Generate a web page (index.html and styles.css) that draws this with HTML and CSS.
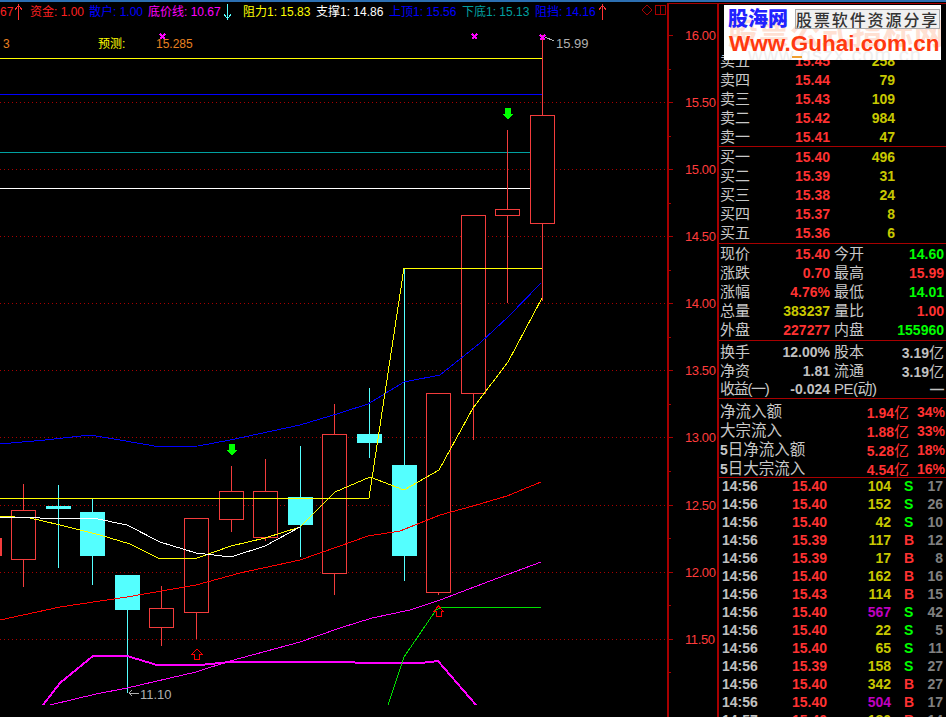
FILE: index.html
```html
<!DOCTYPE html>
<html lang="zh">
<head>
<meta charset="utf-8">
<title>K线</title>
<link rel="stylesheet" href="styles.css">
</head>
<body>
<div class="topbar"></div>
<div class="main">
  <div class="chart">
    <svg class="canvas" width="717" height="715" viewBox="0 2 717 715" xmlns="http://www.w3.org/2000/svg">
      <g class="dots">
        <path d="M0 102.5H667M0 169.5H667M0 236.5H667M0 303.5H667M0 370.5H667M0 437.5H667M0 505.5H667M0 572.5H667M0 639.5H667"/>
      </g>
      <g class="lvl">
        <path class="y" d="M0 58.5H542"/>
        <path class="b" d="M0 94.5H542"/>
        <path class="t" d="M0 152.5H542"/>
        <path class="w" d="M0 188.5H542"/>
      </g>
      <g class="wick-r">
        <path d="M23.5 484V510M23.5 559V587M161.5 586V608M161.5 627V646M196.5 612V639M231.5 466V491M231.5 519V532M265.5 459V491M265.5 537V541M334.5 404V434M334.5 573V595M438.5 592V595M473.5 393V440M507.5 130V209M507.5 215V303M542.5 35V115M542.5 223V301"/>
      </g>
      <g class="wick-c">
        <path d="M58.5 485V568M92.5 499V512M92.5 556V585M127.5 610V693M300.5 446V497M300.5 525V557M369.5 388V434M369.5 443V458M404.5 268V465M404.5 556V581"/>
      </g>
      <g class="box">
        <rect x="11.5" y="510.5" width="24" height="49"/>
        <rect x="149.5" y="608.5" width="24" height="19"/>
        <rect x="184.5" y="518.5" width="24" height="94"/>
        <rect x="219.5" y="491.5" width="24" height="28"/>
        <rect x="253.5" y="491.5" width="24" height="46"/>
        <rect x="322.5" y="434.5" width="24" height="139"/>
        <rect x="426.5" y="393.5" width="24" height="199"/>
        <rect x="461.5" y="215.5" width="24" height="178"/>
        <rect x="495.5" y="209.5" width="24" height="6"/>
        <rect x="530.5" y="115.5" width="24" height="108"/>
      </g>
      <g class="solid">
        <rect x="46" y="506" width="25" height="3"/>
        <rect x="80" y="512" width="25" height="44"/>
        <rect x="115" y="575" width="25" height="35"/>
        <rect x="288" y="497" width="25" height="28"/>
        <rect x="357" y="434" width="25" height="9"/>
        <rect x="392" y="465" width="25" height="91"/>
      </g>
      <rect class="stub" x="0" y="538" width="2" height="18"/>
      <g class="ma">
        <polyline class="mb" points="0,444 45,440 90,435 120,440 160,447 198,446 230,440 300,425 340,413 368,404 404,382 440,375 480,343 508,317 541,283"/>
        <polyline class="my" points="0,516 30,518 60,525 100,535 130,544 160,559 197,558 231,546 265,538 300,527 335,492 370,477 404,490 439,470 473,408 508,362 542,298"/>
        <polyline class="my" points="0,498 369,498 404,268 542,268"/>
        <polyline class="mw" points="0,517 40,518 93,518 127,525 160,542 196,553 231,557 265,546 300,527"/>
        <polyline class="mr" points="0,620 60,607 127,597 196,585 240,573 300,560 340,546 368,536 400,531 440,515 473,506 507,496 541,482"/>
        <polyline class="mm" points="50,705 96,694 127,688 196,672 230,661 300,642 340,628 372,618 410,610 440,600 490,581 541,562"/>
        <polyline class="mmt" points="43,705 60,683 93,656 127,656 157,665 200,665 230,662 340,662 370,663 421,663 438,661 476,705"/>
        <polyline class="mg" points="388,705 404,657 436,610 442,607 541,607"/>
      </g>
      <g class="sig-g">
        <path d="M229 444H235V450H237.500L232 455.500 226.500 450H229Z"/>
        <path d="M505 108H511V114H513.500L508 119.500 502.500 114H505Z"/>
      </g>
      <g class="sig-r">
        <path d="M197 649L202 654H199.500V659H194.500V654H192Z"/>
        <path d="M438.500 606L443 611H441V616H436V611H434Z"/>
      </g>
      <g class="xm">
        <path d="M160 34L165 39M165 34L160 39"/>
        <path d="M472 34L477 39M477 34L472 39"/>
        <path d="M540 35L545 40M545 35L540 40"/>
      </g>
      <g class="note">
        <path d="M129 693H139M129 693L132 690M129 693L132 696"/>
        <path d="M545 37L554 41"/>
      </g>
      <text class="notetext" x="140" y="699">11.10</text>
      <text class="notetext" x="556" y="48">15.99</text>
      <g class="axis">
        <path class="ax" d="M667 3.500H717M667.500 3V717M668.500 3V717"/>
        <path class="ax" d="M669 35.500H673M669 69.500H671M669 102.500H673M669 136.500H671M669 169.500H673M669 203.500H671M669 236.500H673M669 270.500H671M669 303.500H673M669 337.500H671M669 370.500H673M669 404.500H671M669 437.500H673M669 471.500H671M669 505.500H673M669 538.500H671M669 572.500H673M669 605.500H671M669 639.500H673M669 672.500H671"/>
        <path class="ax" d="M647 5L652 10 647 15 642 10ZM655.500 5.500H665.500V14.500H655.500ZM660.500 5V15"/>
      </g>
      <g class="labels">
        <text x="685" y="40">16.00</text>
        <text x="685" y="107">15.50</text>
        <text x="685" y="174">15.00</text>
        <text x="685" y="241">14.50</text>
        <text x="685" y="308">14.00</text>
        <text x="685" y="375">13.50</text>
        <text x="685" y="442">13.00</text>
        <text x="685" y="510">12.50</text>
        <text x="685" y="577">12.00</text>
        <text x="685" y="644">11.50</text>
      </g>
    </svg>
    <div class="legend">
      <div class="legend-row">
        <span class="li w14 red">67</span>
        <span class="li w16"><svg class="arr" width="9" height="16" viewBox="0 0 9 16"><path class="arr-r" d="M4.500 16V1M1 6L4.500 1 8 6"/></svg></span>
        <span class="li w59 red">资金: 1.00</span>
        <span class="li w59 blue">散户: 1.00</span>
        <span class="li w75 mag">底价线: 10.67</span>
        <span class="li w20"><svg class="arr" width="9" height="16" viewBox="0 0 9 16"><path class="arr-c" d="M4.500 0V15M1 10L4.500 15 8 10"/></svg></span>
        <span class="li w73 yel">阻力1: 15.83</span>
        <span class="li w73 wht">支撑1: 14.86</span>
        <span class="li w73 blue">上顶1: 15.56</span>
        <span class="li w73 teal">下底1: 15.13</span>
        <span class="li w63 blue">阻挡: 14.16</span>
        <span class="li w16"><svg class="arr" width="9" height="16" viewBox="0 0 9 16"><path class="arr-r" d="M4.500 16V1M1 6L4.500 1 8 6"/></svg></span>
      </div>
      <div class="legend-row second">
        <span class="li w98 org pad3">3</span>
        <span class="li w58 yel">预测:</span>
        <span class="li w73 org">15.285</span>
      </div>
    </div>
  </div>
  <aside class="side">
    <div class="logo">
      <div class="wm wm1">股票公式指标网</div>
      <div class="wm wm2">www.gszx.com.cn</div>
      <div class="logo-top">
        <span class="logo-cn">股海网</span>
        <span class="logo-sub">股票软件资源分享</span>
      </div>
      <div class="logo-url">Www.Guhai.com.cn</div>
      <div class="logo-mark"></div>
    </div>
    <section class="sec sell">
      <div class="row book"><span class="lb">卖五</span><span class="pr">15.45</span><span class="vo">258</span></div>
      <div class="row book"><span class="lb">卖四</span><span class="pr">15.44</span><span class="vo">79</span></div>
      <div class="row book"><span class="lb">卖三</span><span class="pr">15.43</span><span class="vo">109</span></div>
      <div class="row book"><span class="lb">卖二</span><span class="pr">15.42</span><span class="vo">984</span></div>
      <div class="row book"><span class="lb">卖一</span><span class="pr">15.41</span><span class="vo">47</span></div>
    </section>
    <section class="sec pb1">
      <div class="row book"><span class="lb">买一</span><span class="pr">15.40</span><span class="vo">496</span></div>
      <div class="row book"><span class="lb">买二</span><span class="pr">15.39</span><span class="vo">31</span></div>
      <div class="row book"><span class="lb">买三</span><span class="pr">15.38</span><span class="vo">24</span></div>
      <div class="row book"><span class="lb">买四</span><span class="pr">15.37</span><span class="vo">8</span></div>
      <div class="row book"><span class="lb">买五</span><span class="pr">15.36</span><span class="vo">6</span></div>
    </section>
    <section class="sec pb1">
      <div class="row quote"><span class="lb">现价</span><span class="pr">15.40</span><span class="lb">今开</span><span class="val grn">14.60</span></div>
      <div class="row quote"><span class="lb">涨跌</span><span class="pr">0.70</span><span class="lb">最高</span><span class="val rd">15.99</span></div>
      <div class="row quote"><span class="lb">涨幅</span><span class="pr">4.76%</span><span class="lb">最低</span><span class="val grn">14.01</span></div>
      <div class="row quote"><span class="lb">总量</span><span class="pr olive">383237</span><span class="lb">量比</span><span class="val rd">1.00</span></div>
      <div class="row quote"><span class="lb">外盘</span><span class="pr">227277</span><span class="lb">内盘</span><span class="val grn">155960</span></div>
    </section>
    <section class="sec">
      <div class="row quote"><span class="lb">换手</span><span class="pr gry">12.00%</span><span class="lb">股本</span><span class="val gry">3.19<i class="yi">亿</i></span></div>
      <div class="row quote"><span class="lb">净资</span><span class="pr gry">1.81</span><span class="lb">流通</span><span class="val gry">3.19<i class="yi">亿</i></span></div>
      <div class="row quote"><span class="lb tight">收益(一)</span><span class="pr gry">-0.024</span><span class="lb tight pe">PE(动)</span><span class="val gry">—</span></div>
    </section>
    <section class="sec flow">
      <div class="row flowrow"><span class="lb">净流入额</span><span class="pr">1.94<i class="yi">亿</i></span><span class="pr">34%</span></div>
      <div class="row flowrow"><span class="lb">大宗流入</span><span class="pr">1.88<i class="yi">亿</i></span><span class="pr">33%</span></div>
      <div class="row flowrow"><span class="lb"><b class="num">5</b>日净流入额</span><span class="pr">5.28<i class="yi">亿</i></span><span class="pr">18%</span></div>
      <div class="row flowrow"><span class="lb"><b class="num">5</b>日大宗流入</span><span class="pr">4.54<i class="yi">亿</i></span><span class="pr">16%</span></div>
    </section>
    <section class="ticks">
      <div class="row tick"><span>14:56</span><span class="pr">15.40</span><span class="vo">104</span><span class="grn">S</span><span class="ct">17</span></div>
      <div class="row tick"><span>14:56</span><span class="pr">15.40</span><span class="vo">152</span><span class="grn">S</span><span class="ct">26</span></div>
      <div class="row tick"><span>14:56</span><span class="pr">15.40</span><span class="vo">42</span><span class="grn">S</span><span class="ct">10</span></div>
      <div class="row tick"><span>14:56</span><span class="pr">15.39</span><span class="vo">117</span><span class="rd">B</span><span class="ct">12</span></div>
      <div class="row tick"><span>14:56</span><span class="pr">15.39</span><span class="vo">17</span><span class="rd">B</span><span class="ct">8</span></div>
      <div class="row tick"><span>14:56</span><span class="pr">15.40</span><span class="vo">162</span><span class="rd">B</span><span class="ct">16</span></div>
      <div class="row tick"><span>14:56</span><span class="pr">15.43</span><span class="vo">114</span><span class="rd">B</span><span class="ct">15</span></div>
      <div class="row tick"><span>14:56</span><span class="pr">15.40</span><span class="vo pur">567</span><span class="grn">S</span><span class="ct">42</span></div>
      <div class="row tick"><span>14:56</span><span class="pr">15.40</span><span class="vo">22</span><span class="grn">S</span><span class="ct">5</span></div>
      <div class="row tick"><span>14:56</span><span class="pr">15.40</span><span class="vo">65</span><span class="grn">S</span><span class="ct">11</span></div>
      <div class="row tick"><span>14:56</span><span class="pr">15.39</span><span class="vo">158</span><span class="grn">S</span><span class="ct">27</span></div>
      <div class="row tick"><span>14:56</span><span class="pr">15.40</span><span class="vo">342</span><span class="rd">B</span><span class="ct">27</span></div>
      <div class="row tick"><span>14:56</span><span class="pr">15.40</span><span class="vo pur">504</span><span class="rd">B</span><span class="ct">17</span></div>
      <div class="row tick"><span>14:57</span><span class="pr">15.40</span><span class="vo">180</span><span class="rd">B</span><span class="ct">14</span></div>
    </section>
  </aside>
</div>
</body>
</html>
```
FILE: styles.css
```css
* { box-sizing: border-box; }
html, body { margin: 0; padding: 0; height: 717px; overflow: hidden; background: #000; }
body { font-family: "Liberation Sans", "Noto Sans CJK SC", sans-serif; color: #c0c0c0; }
i { font-style: normal; }

.topbar { height: 2px; background: #2c6fb2; }
.main { display: flex; height: 715px; }
.chart { position: relative; width: 717px; flex: none; }
.canvas { display: block; }

.dots path { fill: none; stroke: #a80000; stroke-dasharray: 1 3; }
.lvl path { fill: none; shape-rendering: crispEdges; }
.lvl .y { stroke: #ffff00; } .lvl .b { stroke: #0000ff; } .lvl .t { stroke: #00a0a0; } .lvl .w { stroke: #fff; }
.wick-r path { fill: none; stroke: #f33c3c; shape-rendering: crispEdges; }
.wick-c path { fill: none; stroke: #54ffff; shape-rendering: crispEdges; }
.box rect { fill: #000; stroke: #f33c3c; shape-rendering: crispEdges; }
.solid rect { fill: #54ffff; }
.stub { fill: #f33c3c; }
.ma polyline { fill: none; stroke-width: 1; shape-rendering: crispEdges; }
.ma .mb { stroke: #0000ff; } .ma .my { stroke: #ffff00; } .ma .mw { stroke: #fff; }
.ma .mr { stroke: #ff0000; } .ma .mm { stroke: #ff00ff; } .ma .mg { stroke: #00e000; }
.ma .mmt { stroke: #ff00ff; stroke-width: 2; }
.sig-g path { fill: #00ff00; shape-rendering: crispEdges; }
.sig-r path { fill: none; stroke: #ff0000; shape-rendering: crispEdges; }
.xm path { fill: none; stroke: #ff00ff; stroke-width: 1.5; shape-rendering: crispEdges; }
.note path { fill: none; stroke: #b0b0b0; shape-rendering: crispEdges; }
.notetext { fill: #b0b0b0; font-size: 13px; }
.ax { fill: none; stroke: #a80000; shape-rendering: crispEdges; }
.labels text { fill: #ff3c3c; font-size: 13px; letter-spacing: -0.4px; }

.legend { position: absolute; left: 0; top: 0; width: 667px; font-size: 12px; line-height: 16px; }
.legend-row { display: flex; align-items: center; height: 16px; margin-top: 1px; white-space: nowrap; }
.legend-row:first-child { margin-top: 2px; }
.legend-row.second { margin-top: 16px; }
.li { flex: none; display: block; }
.arr { display: block; }
.arr-r { fill: none; stroke: #ff3232; shape-rendering: crispEdges; }
.arr-c { fill: none; stroke: #54ffff; shape-rendering: crispEdges; }
.w14 { width: 14px; } .w16 { width: 16px; } .w20 { width: 20px; } .w59 { width: 59px; } .w75 { width: 75px; }
.w73 { width: 73px; } .w63 { width: 63px; } .w98 { width: 98px; } .w58 { width: 58px; }
.pad3 { padding-left: 3px; }
.red { color: #ff2020; } .blue { color: #0000ff; } .mag { color: #ff00ff; } .yel { color: #ffff00; }
.wht { color: #fff; } .teal { color: #00a0a0; } .org { color: #e88020; }

.side { position: relative; width: 229px; flex: none; margin-top: 1px; border-left: 2px solid #a80000; border-top: 1px solid #a80000; overflow: hidden; }
.logo { position: absolute; left: 5px; top: 1px; width: 217px; height: 55px; background: #fff; z-index: 2; overflow: hidden; }
.wm { position: absolute; white-space: nowrap; }
.wm1 { left: 4px; top: 12px; font-size: 30px; line-height: 34px; color: #ffe0d2; font-weight: 700; letter-spacing: 1px; }
.wm2 { left: 24px; top: 40px; font-size: 20px; line-height: 20px; color: #eee; letter-spacing: 1px; }
.logo-top { position: relative; display: flex; align-items: center; height: 28px; padding-left: 4px; gap: 7px; }
.logo-cn { font-size: 20px; line-height: 24px; font-weight: 900; color: #2222ff; }
.logo-sub { font-size: 16px; line-height: 18px; letter-spacing: 1.9px; color: #333; background: #f0f0f0; border: 1px solid #aaa; padding: 0; font-weight: 500; font-family: "Noto Sans CJK SC", sans-serif; white-space: nowrap; }
.logo-url { position: relative; font-size: 22.500px; line-height: 24px; font-weight: 700; color: #ff3a10; padding-left: 5px; white-space: nowrap; margin-top: -1px; }
.logo-mark { position: absolute; left: 68px; bottom: 2px; width: 10px; height: 2px; background: #f0a030; }

.sec { border-bottom: 1px solid #a80000; }
.sell { padding-top: 47px; }
.pb1 { padding-bottom: 1px; }
.flow { padding-top: 2px; }
.row { display: grid; align-items: center; white-space: nowrap; font-weight: 700; font-size: 14px; }
.lb { font-size: 15px; font-weight: 400; line-height: 19px; color: #c8c8c8; }
.pr { color: #ff3232; text-align: right; }
.vo { color: #c8c800; text-align: right; }
.val { text-align: right; }
.olive { color: #c8c800; }
.gry { color: #c0c0c0; }
.grn { color: #00ff00; } .rd { color: #ff3232; }
.pur { color: #c000c0; }
.ct { color: #808080; text-align: right; }
.yi { font-size: 15px; font-weight: 400; }
.num { font-weight: 700; font-size: 14px; }
.tight { letter-spacing: -1.3px; }
.pe { letter-spacing: -0.5px; }
.book { height: 19px; grid-template-columns: 60px 50px 65px; padding-left: 1px; }
.quote { height: 19px; grid-template-columns: 58px 52px 56px 58px; padding-left: 1px; }
.quote > .lb:nth-child(3) { padding-left: 4px; }
.flowrow { height: 19px; grid-template-columns: 110px 79px 36px; padding-left: 1px; }
.flowrow .lb { font-size: 15.500px; }
.ticks { margin-top: -1px; }
.tick { height: 18px; grid-template-columns: 52px 53px 64px 20px 32px; padding-left: 3px; }
.ticks .grn, .ticks .rd { padding-left: 13px; }
```
